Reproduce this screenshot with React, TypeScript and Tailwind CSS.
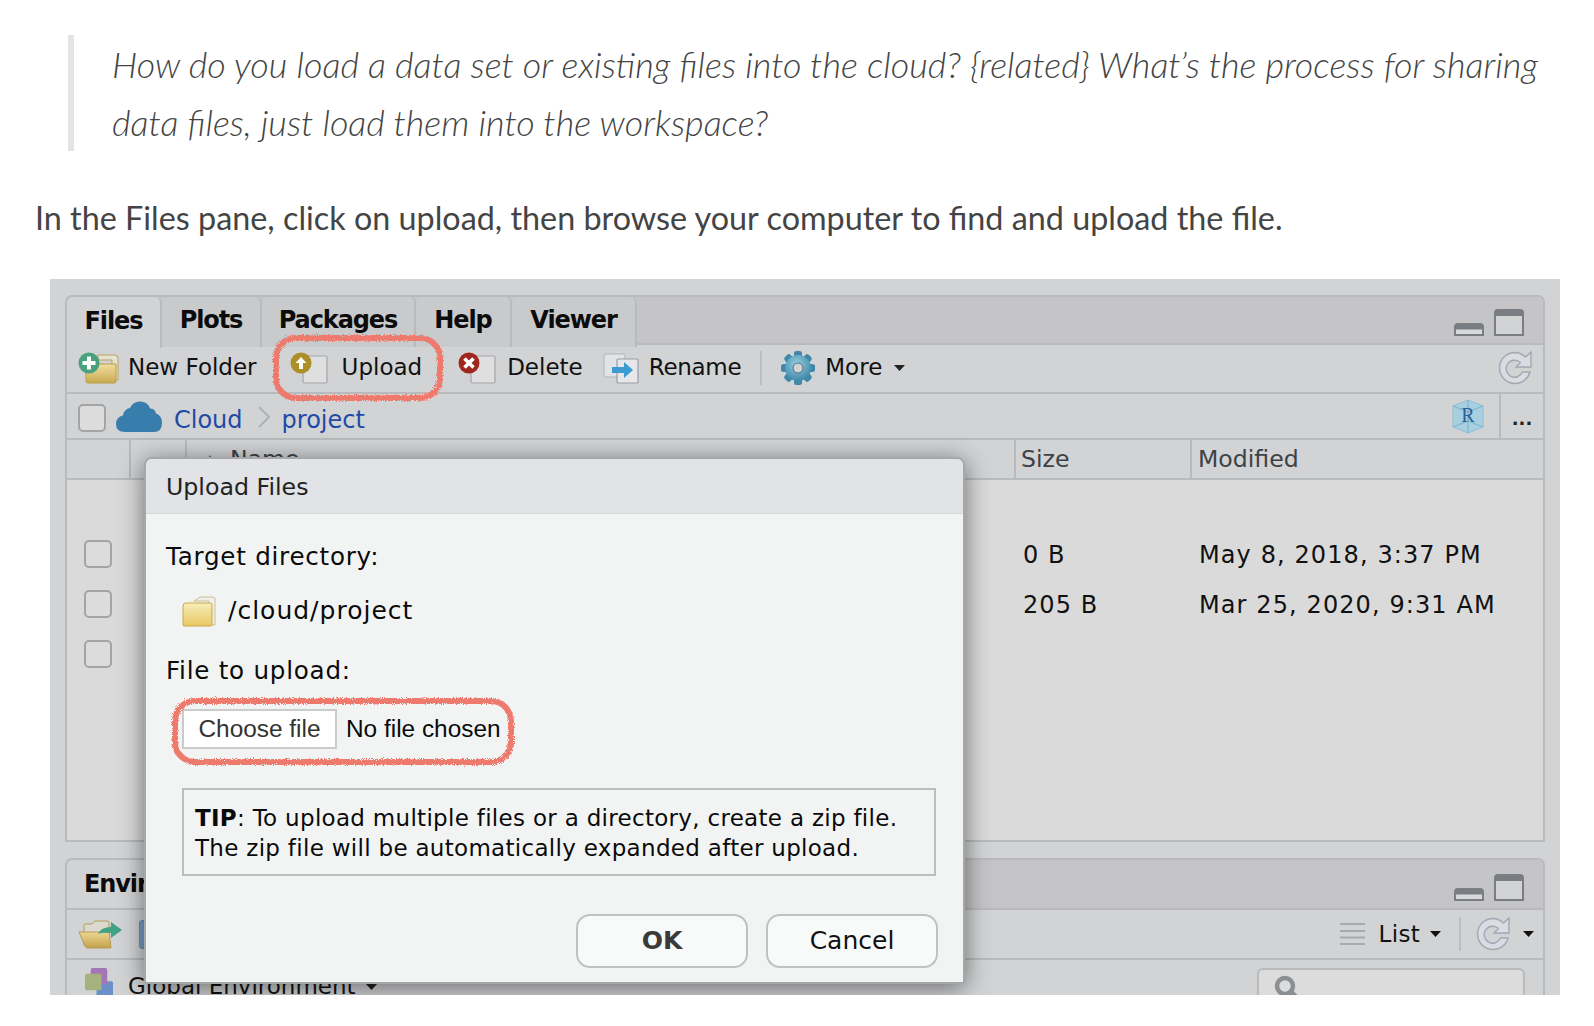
import React from "react";

const ui = "font-['DejaVu_Sans',sans-serif]";

function Page({ x, y, w = 24, h = 27 }: { x: number; y: number; w?: number; h?: number }) {
  return <rect x={x} y={y} width={w} height={h} rx="1.5" fill="#dfdfe0" stroke="#a2a5ab" strokeWidth="1.2" />;
}

function FolderPlus() {
  return (
    <svg width="42" height="32" viewBox="0 0 42 32" className="shrink-0">
      <defs>
        <linearGradient id="fg1" x1="0" y1="0" x2="0" y2="1">
          <stop offset="0" stopColor="#f0dfa0" />
          <stop offset="1" stopColor="#c9a94f" />
        </linearGradient>
      </defs>
      <path d="M20 3h17q3 0 3 3v22h-6V8H20z" fill="#e6e2d2" stroke="#b9a35c" />
      <path d="M8 12h30v17q0 2-2 2H10q-2 0-2-2z" fill="url(#fg1)" stroke="#b99c45" />
      <circle cx="11" cy="11" r="10.5" fill="#4aa180" />
      <path d="M11 4.5v13M4.5 11h13" stroke="#fff" strokeWidth="4" />
    </svg>
  );
}

function UploadIcon() {
  return (
    <svg width="38" height="32" viewBox="0 0 38 32" className="shrink-0">
      <Page x={13} y={4} h={27} />
      <circle cx="11" cy="11" r="10.5" fill="#ad8f2a" />
      <path d="M11 5l5.5 6H13v6H9v-6H5.5z" fill="#fff" />
    </svg>
  );
}

function DeleteIcon() {
  return (
    <svg width="38" height="32" viewBox="0 0 38 32" className="shrink-0">
      <Page x={13} y={4} h={27} />
      <circle cx="11" cy="11" r="10.5" fill="#a1261d" />
      <path d="M6.5 6.5l9 9M15.5 6.5l-9 9" stroke="#fff" strokeWidth="3.6" />
    </svg>
  );
}

function RenameIcon() {
  return (
    <svg width="36" height="32" viewBox="0 0 36 32" className="shrink-0">
      <rect x="1" y="2" width="21" height="23" rx="1" fill="#e2e3e6" stroke="#b0b3b8" />
      <rect x="14" y="7" width="21" height="24" rx="1" fill="#e6e7e9" stroke="#9a9da4" strokeWidth="1.2" />
      <path d="M9 15h12v-5l9 8-9 8v-5H9z" fill="#3d9bd4" />
    </svg>
  );
}

function Gear() {
  const teeth = [0, 45, 90, 135, 180, 225, 270, 315];
  return (
    <svg width="36" height="36" viewBox="0 0 36 36" className="shrink-0">
      <defs>
        <radialGradient id="gg" cx="0.45" cy="0.35" r="0.7">
          <stop offset="0" stopColor="#93cfdf" />
          <stop offset="1" stopColor="#3a83a6" />
        </radialGradient>
      </defs>
      {teeth.map((a) => (
        <rect key={a} x="14" y="1" width="8" height="9" rx="2.5" fill="#3f88aa" transform={`rotate(${a} 18 18)`} />
      ))}
      <circle cx="18" cy="18" r="13" fill="url(#gg)" />
      <circle cx="18" cy="18" r="5" fill="#d0d2d4" stroke="#55707f" />
    </svg>
  );
}

function Refresh({ w = 34 }: { w?: number }) {
  return (
    <svg width={w} height={w} viewBox="0 0 34 34" className="shrink-0">
      <path
        d="M17 1.500A15.500 15.500 0 1 0 32 21h-7.500a8.500 8.500 0 1 1-2-9.500L18 16h15V1l-5.500 5A15.500 15.500 0 0 0 17 1.500z"
        fill="#d9dce2"
        stroke="#a3a8b1"
        strokeWidth="1.4"
      />
    </svg>
  );
}

function Minimize() {
  return (
    <svg width="30" height="14" viewBox="0 0 30 14" className="shrink-0">
      <path d="M0 14V5q0-4 4-4h22q4 0 4 4v9z" fill="#7a7e82" />
      <rect x="2" y="7.500" width="26" height="4.500" fill="#d8d9da" />
    </svg>
  );
}

function Maximize() {
  return (
    <svg width="30" height="27" viewBox="0 0 30 27" className="shrink-0">
      <path d="M0 27V4q0-4 4-4h22q4 0 4 4v23z" fill="#7a7e82" />
      <rect x="2" y="7" width="26" height="18" fill="#d2d3d5" />
    </svg>
  );
}

function Caret({ dark = false }: { dark?: boolean }) {
  return (
    <svg width="11" height="6" viewBox="0 0 11 6" className="shrink-0">
      <path d="M0 0h11L5.500 6z" fill={dark ? "#111" : "#222"} />
    </svg>
  );
}

function Cloud() {
  return (
    <svg width="46" height="32" viewBox="0 0 46 32" className="shrink-0">
      <path
        d="M9 31Q0 31 0 23q0-7 7-8.500Q8 8 14 7q3-7 11-6.500 7 .5 9 7 5 0 6 5 6 2 6 9.500 0 9-8 9z"
        fill="#387eac"
      />
    </svg>
  );
}

function RCube() {
  return (
    <svg width="32" height="35" viewBox="0 0 32 35" className="shrink-0">
      <path d="M16 1l15 6v21l-15 6-15-6V7z" fill="#a8cfe0" stroke="#8fc0d6" />
      <path d="M1 7l15 6 15-6M16 13v21M1 28l15-6 15 6M16 1v21" fill="none" stroke="#5fa9b9" strokeWidth="0.7" />
      <text x="16" y="23" textAnchor="middle" fontSize="20" fontFamily="Liberation Serif, serif" fill="#2c5f9c">
        R
      </text>
    </svg>
  );
}

function SmallFolder() {
  return (
    <svg width="34" height="31" viewBox="0 0 34 31" className="shrink-0">
      <defs>
        <linearGradient id="fg2" x1="0" y1="0" x2="0" y2="1">
          <stop offset="0" stopColor="#f8eeb8" />
          <stop offset="1" stopColor="#e8c764" />
        </linearGradient>
      </defs>
      <path d="M12 5l6-4h13q2 0 2 2v26h-6V5z" fill="#eeeeec" stroke="#d0c08a" />
      <path d="M1 10q0-3 3-3h24q2 0 2 2v20q0 1-2 1H2q-1 0-1-1z" fill="url(#fg2)" stroke="#c9a94b" />
    </svg>
  );
}

function OpenFolder() {
  return (
    <svg width="44" height="29" viewBox="0 0 44 29" className="shrink-0">
      <defs>
        <linearGradient id="fg3" x1="0" y1="0" x2="0" y2="1">
          <stop offset="0" stopColor="#ecd793" />
          <stop offset="1" stopColor="#c4a24a" />
        </linearGradient>
      </defs>
      <path d="M6 11V5q0-1 1-1h7l3-3h12q2 0 2 2v22H6z" fill="#dcdad0" stroke="#b59b55" />
      <path d="M1 12h30l2 16H10q-2 0-3-2z" fill="url(#fg3)" stroke="#b59b55" />
      <path d="M20 14q3-7 13-7V2l11 8-11 8v-5q-8-1-13 1z" fill="#43a283" />
    </svg>
  );
}

function EnvSquares() {
  return (
    <svg width="34" height="28" viewBox="0 0 34 34" className="shrink-0 self-start">
      <rect x="14" y="16" width="20" height="20" rx="2" fill="#6b90c9" />
      <rect x="7" y="0" width="20" height="20" rx="2" fill="#a576b5" />
      <rect x="0" y="7" width="20" height="20" rx="2" fill="#a6b27e" />
    </svg>
  );
}

function ListLines() {
  return (
    <svg width="25" height="24" viewBox="0 0 25 24" className="shrink-0">
      <path d="M0 2h25M0 9h25M0 15.500h25M0 22h25" stroke="#a7a9ac" strokeWidth="2" />
    </svg>
  );
}

function Search() {
  return (
    <svg width="30" height="30" viewBox="0 0 30 30" className="shrink-0">
      <circle cx="11" cy="11" r="8" fill="none" stroke="#8b8f92" strokeWidth="4.500" />
      <path d="M17 17l10 10" stroke="#8b8f92" strokeWidth="5" />
    </svg>
  );
}

function Check({ className = "" }: { className?: string }) {
  return <div className={`w-[28px] h-[28px] rounded-[5px] border-2 border-[#a3a4a6] bg-[#dcdcdc] shrink-0 ${className}`} />;
}

function Scribble({ id, w, h, className }: { id: string; w: number; h: number; className: string }) {
  return (
    <svg width={w} height={h} viewBox={`0 0 ${w} ${h}`} className={`absolute pointer-events-none ${className}`}>
      <defs>
        <filter id={id} x="-5%" y="-10%" width="110%" height="120%">
          <feTurbulence type="fractalNoise" baseFrequency="0.9" numOctaves="2" seed="4" />
          <feDisplacementMap in="SourceGraphic" scale="5" />
        </filter>
      </defs>
      <rect x="5" y="5" width={w - 10} height={h - 10} rx="20" fill="none" stroke="#ee7a6e" strokeWidth="6" filter={`url(#${id})`} />
    </svg>
  );
}

function Tab({ label, active, w }: { label: string; active?: boolean; w: string }) {
  return (
    <div
      className={`${w} h-[50px] pb-[4px] rounded-t-[6px] border-r-2 border-[#b9babc] flex items-center justify-center text-[24px] font-bold tracking-[-1.1px] text-[#0c0c0c] ${
        active ? "bg-[#d2d3d5] h-[51px] -mb-px" : "bg-[#c9cacc]"
      }`}
    >
      {label}
    </div>
  );
}

function Files() {
  return (
    <div className="h-[547px] border-2 border-[#b9babc] rounded-t-[7px] flex flex-col overflow-hidden">
      <div className="h-[48px] shrink-0 bg-[#c5c5c7] border-b-2 border-[#b9babc] flex items-start pr-[19px]">
        <Tab label="Files" active w="w-[95px]" />
        <Tab label="Plots" w="w-[100px]" />
        <Tab label="Packages" w="w-[154px]" />
        <Tab label="Help" w="w-[96px]" />
        <Tab label="Viewer" w="w-[125px]" />
        <div className="ml-auto flex items-end gap-[10px] h-[39px]">
          <Minimize />
          <Maximize />
        </div>
      </div>
      <div className="h-[49px] shrink-0 pb-[2px] border-b-2 border-[#b9babc] flex items-center pl-[11px] pr-[11px] text-[23px] text-[#111]">
        <FolderPlus />
        <span className="ml-[8px]">New Folder</span>
        <div className="ml-[33px]"><UploadIcon /></div>
        <span className="ml-[14px]">Upload</span>
        <div className="ml-[36px]"><DeleteIcon /></div>
        <span className="ml-[11px]">Delete</span>
        <div className="ml-[20px]"><RenameIcon /></div>
        <span className="ml-[10px] tracking-[-0.3px]">Rename</span>
        <div className="ml-[19px] w-[2px] h-[34px] bg-[#bcbdbf]" />
        <div className="ml-[18px]"><Gear /></div>
        <span className="ml-[9px]">More</span>
        <div className="ml-[12px]"><Caret /></div>
        <div className="ml-auto"><Refresh /></div>
      </div>
      <div className="h-[46px] shrink-0 border-b-2 border-[#b9babc] flex items-center pl-[11px] text-[24px] text-[#1f4aa5]">
        <Check className="mt-[4px]" />
        <div className="ml-[10px] mt-[2px]"><Cloud /></div>
        <span className="ml-[12px] mt-[8px]">Cloud</span>
        <svg width="14" height="24" viewBox="0 0 14 24" className="ml-[14px] mt-[2px] shrink-0">
          <path d="M2 2l10 10L2 22" fill="none" stroke="#b0b1b3" strokeWidth="2" />
        </svg>
        <span className="ml-[11px] mt-[8px]">project</span>
        <div className="ml-auto flex items-center h-full">
          <RCube />
          <div className="ml-[15px] w-[2px] h-full bg-[#b9babc]" />
          <span className="w-[42px] text-center text-[#222] text-[18px] font-bold leading-none pt-[6px]">...</span>
        </div>
      </div>
      <div className="h-[40px] shrink-0 border-b-2 border-[#b9babc] flex items-stretch text-[23.6px] text-[#3d4246]">
        <div className="w-[64px] border-r-2 border-[#b9babc]" />
        <div className="w-[56px] border-r-2 border-[#b9babc]" />
        <div className="w-[829px] border-r-2 border-[#b9babc] pl-[18px] flex items-center">
          <svg width="10" height="8" viewBox="0 0 10 8" className="shrink-0">
            <path d="M5 0l5 8H0z" fill="#6a6c6f" />
          </svg>
          <span className="ml-[15px] mt-[2px]">Name</span>
        </div>
        <div className="w-[176px] border-r-2 border-[#b9babc] pl-[5px] pt-[2px] flex items-center">Size</div>
        <div className="flex-1 pl-[6px] pt-[2px] flex items-center">Modified</div>
      </div>
      <div className="flex-1 bg-[#dadada] pt-[60px] pl-[17px] flex flex-col gap-[22px] text-[24px] tracking-[1.1px] text-[#111]">
        {[
          ["0 B", "May 8, 2018, 3:37 PM"],
          ["205 B", "Mar 25, 2020, 9:31 AM"],
          ["", ""],
        ].map(([s, d], i) => (
          <div key={i} className="h-[28px] flex items-center">
            <Check />
            <span className="ml-[911px] mt-[2px] w-[176px]">{s}</span>
            <span className="mt-[2px]">{d}</span>
          </div>
        ))}
      </div>
    </div>
  );
}

function Env() {
  return (
    <div className="mt-[16px] border-x-2 border-t-2 border-[#b9babc] rounded-t-[7px] flex flex-col h-[140px]">
      <div className="h-[50px] shrink-0 bg-[#c5c5c7] border-b-2 border-[#b9babc] flex items-start pr-[19px] rounded-t-[6px]">
        <div className="w-[95px] h-[48px] bg-[#d2d3d5] rounded-t-[6px] pl-[17px] flex items-center text-[24px] font-bold tracking-[-1.1px] text-[#0c0c0c]">
          Environment
        </div>
        <div className="ml-auto flex items-end gap-[10px] h-[41px]">
          <Minimize />
          <Maximize />
        </div>
      </div>
      <div className="h-[50px] shrink-0 border-b-2 border-[#b9babc] flex items-center pl-[11px] pr-[9px] text-[23px] text-[#111]">
        <OpenFolder />
        <div className="ml-[17px] w-[20px] h-[29px] rounded-[3px] bg-[#7e9fca] border border-[#6f8fb8] shrink-0" />
        <div className="ml-auto"><ListLines /></div>
        <span className="ml-[14px] tracking-[0.3px]">List</span>
        <div className="ml-[10px]"><Caret dark /></div>
        <div className="ml-[18px] w-[2px] h-[34px] bg-[#bcbdbf]" />
        <div className="ml-[15px]"><Refresh /></div>
        <div className="ml-[13px]"><Caret dark /></div>
      </div>
      <div className="flex-1 flex items-start pl-[15px] pr-[18px] pt-[8px] text-[23px] text-[#111] overflow-hidden">
        <EnvSquares />
        <span className="ml-[12px] mt-[1px]">Global Environment</span>
        <div className="ml-[10px] mt-[16px]"><Caret /></div>
        <div className="ml-auto w-[268px] h-[40px] rounded-[6px] border-2 border-[#b9babc] bg-[#dcdcdc] pl-[15px] pt-[5px] shrink-0">
          <Search />
        </div>
      </div>
    </div>
  );
}

function Dialog() {
  return (
    <div className="absolute left-[94px] top-[178px] w-[821px] h-[527px] rounded-t-[8px] border-2 border-[#a6a7a9] bg-[#f2f4f4] shadow-[0_4px_24px_rgba(0,0,0,0.5)] flex flex-col text-[#0a0a0a]">
      <div className="h-[55px] shrink-0 bg-[#e1e3e6] rounded-t-[6px] pl-[20px] pt-[3px] flex items-center text-[23.7px] text-[#222] border-b border-[#d5d7da]">
        Upload Files
      </div>
      <div className="flex-1 relative px-[20px] text-[24.6px] tracking-[0.75px]">
        <div className="mt-[28px] leading-[30px]">Target directory:</div>
        <div className="mt-[22px] ml-[16px] flex items-center h-[34px]">
          <SmallFolder />
          <span className="ml-[12px] text-[25px] tracking-[1px]">/cloud/project</span>
        </div>
        <div className="mt-[28px] leading-[30px]">File to upload:</div>
        <div className="mt-[23px] ml-[16px] flex items-center h-[40px] text-[24.4px] font-['Liberation_Sans',sans-serif] tracking-normal">
          <div className="w-[155px] h-[40px] bg-white border-2 border-[#cbcbcb] flex items-center justify-center text-[#333]">
            Choose file
          </div>
          <span className="ml-[9px]">No file chosen</span>
        </div>
        <div className="mt-[39px] ml-[16px] w-[754px] h-[88px] border-2 border-[#bcbdbd] pl-[11px] pt-[13px] text-[23px] tracking-[0.3px] leading-[30px]">
          <div><b className="font-bold">TIP</b>: To upload multiple files or a directory, create a zip file.</div>
          <div>The zip file will be automatically expanded after upload.</div>
        </div>
        <div className="mt-[38px] flex justify-end gap-[18px] pr-[5px] tracking-normal text-[25px]">
          <div className="w-[172px] h-[54px] rounded-[14px] border-2 border-[#c0c1c1] bg-[#f8f9f9] flex items-center justify-center font-bold text-[#3a3a3a]">OK</div>
          <div className="w-[172px] h-[54px] rounded-[14px] border-2 border-[#c0c1c1] bg-[#f8f9f9] flex items-center justify-center text-[#111]">Cancel</div>
        </div>
      </div>
    </div>
  );
}

export default function App() {
  return (
    <div className="w-[1594px] h-[1026px] bg-white overflow-hidden pt-[36px]">
      <blockquote className="ml-[68px] h-[116px] border-l-[6px] border-[#e4e4e4] pl-[38px] font-['Lato',sans-serif] font-light italic text-[36px] leading-[58px] text-[#444] whitespace-nowrap">
        <div className="-mt-px">How do you load a data set or existing files into the cloud? {"{related}"} What’s the process for sharing</div>
        <div>data files, just load them into the workspace?</div>
      </blockquote>
      <p className="mt-[45px] ml-[35px] h-[44px] font-['Lato',sans-serif] text-[32.35px] leading-[44px] text-[#444] whitespace-nowrap">
        In the Files pane, click on upload, then browse your computer to find and upload the file.
      </p>
      <div className={`relative mt-[39px] ml-[50px] w-[1510px] h-[716px] bg-[#d2d3d5] overflow-hidden px-[15px] pt-[16px] ${ui}`}>
        <Files />
        <Env />
        <Dialog />
        <Scribble id="s1" w={174} h={70} className="left-[221px] top-[54px]" />
        <Scribble id="s2" w={346} h={71} className="left-[120px] top-[417px]" />
      </div>
    </div>
  );
}
